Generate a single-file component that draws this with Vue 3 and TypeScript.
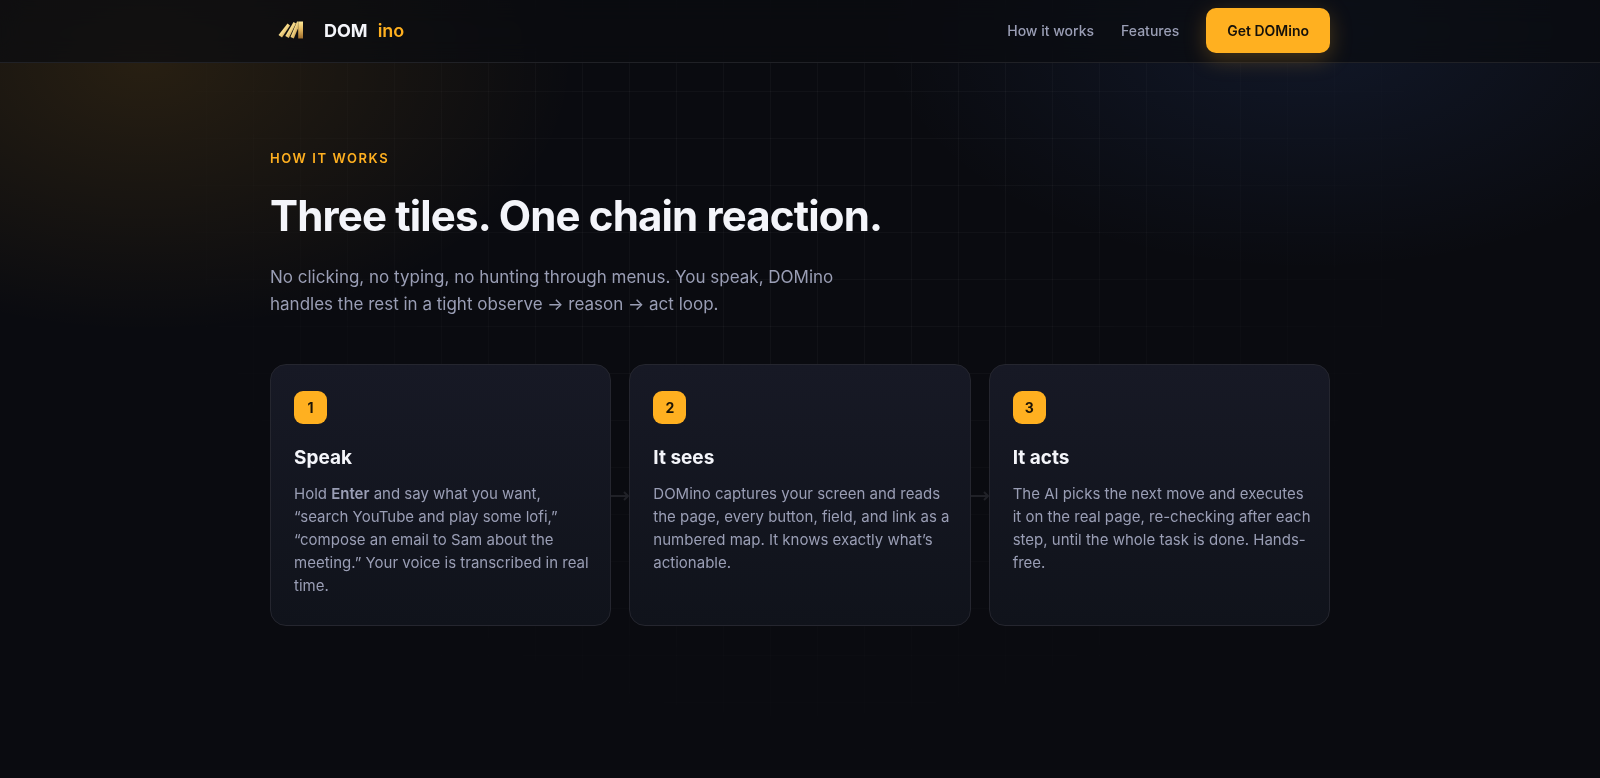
<script setup lang="ts">
interface Step {
  title: string
  lead: string
  strong?: string
  rest?: string
}

const steps: Step[] = [
  {
    title: 'Speak',
    lead: 'Hold ',
    strong: 'Enter',
    rest: ' and say what you want, “search YouTube and play some lofi,” “compose an email to Sam about the meeting.” Your voice is transcribed in real time.',
  },
  {
    title: 'It sees',
    lead: 'DOMino captures your screen and reads the page, every button, field, and link as a numbered map. It knows exactly what’s actionable.',
  },
  {
    title: 'It acts',
    lead: 'The AI picks the next move and executes it on the real page, re-checking after each step, until the whole task is done. Hands-free.',
  },
]
</script>

<template>
  <div class="page">
    <div class="grid-lines" aria-hidden="true"></div>
    <header class="topbar">
      <div class="wrap bar">
        <a class="brand" href="#">
          <svg class="mark" viewBox="0 0 44 44" aria-hidden="true">
            <defs>
              <linearGradient id="gold" x1="0" y1="0" x2="1" y2="1">
                <stop offset="0" stop-color="#c08a3a" />
                <stop offset="0.45" stop-color="#f7dc8c" />
                <stop offset="1" stop-color="#a97328" />
              </linearGradient>
              <linearGradient id="goldBar" x1="0" y1="0" x2="0" y2="1">
                <stop offset="0" stop-color="#ffe998" />
                <stop offset="0.5" stop-color="#dfb25a" />
                <stop offset="1" stop-color="#9a6a2c" />
              </linearGradient>
            </defs>
            <path d="M17.500 14.500 20 16.500 12 28.500 8.500 26Z" fill="url(#gold)" />
            <path d="M23.500 13 26 14.500 18.800 29 15.300 27Z" fill="url(#gold)" />
            <path d="M27 12.500H28V19.500L23.800 29.500 20.500 28Z" fill="url(#gold)" />
            <path d="M28.200 12.500H33V29.500H28.200Z" fill="url(#goldBar)" />
          </svg>
          <span class="name">DOM</span>
          <span class="name accent">ino</span>
        </a>
        <nav class="links" aria-label="Main">
          <a href="#how">How it works</a>
          <a href="#features">Features</a>
          <a class="cta" href="#get">Get DOMino</a>
        </nav>
      </div>
    </header>

    <main id="how" class="wrap content">
      <p class="eyebrow">HOW IT WORKS</p>
      <h1>Three tiles. One chain reaction.</h1>
      <p class="intro">
        No clicking, no typing, no hunting through menus. You speak, DOMino handles the rest in a
        tight observe → reason → act loop.
      </p>
      <div class="cards">
        <article v-for="(step, i) in steps" :key="step.title" class="card">
          <span class="num">{{ i + 1 }}</span>
          <h2>{{ step.title }}</h2>
          <p>{{ step.lead }}<strong v-if="step.strong">{{ step.strong }}</strong>{{ step.rest }}</p>
          <svg v-if="i < steps.length - 1" class="arrow" viewBox="0 0 18 12" aria-hidden="true">
            <path d="M0 6H17M13 2L17 6L13 10" fill="none" stroke="#202127" stroke-width="2" />
          </svg>
        </article>
      </div>
    </main>
  </div>
</template>

<style>
body {
  margin: 0;
  background: #0a0b10;
}
</style>

<style scoped>
.page {
  position: relative;
  min-height: 100vh;
  font-family: Inter, "Liberation Sans", sans-serif;
  color: #f4f5fa;
  background:
    radial-gradient(430px 270px at 145px 62px, rgba(255, 176, 32, 0.12), transparent),
    radial-gradient(430px 240px at 1310px 30px, rgba(80, 135, 255, 0.1), transparent),
    #0a0b10;
}

.grid-lines {
  position: absolute;
  inset: 0;
  background:
    linear-gradient(rgba(255, 255, 255, 0.03) 1px, transparent 1px) 0 44px / 47px 47px,
    linear-gradient(90deg, rgba(255, 255, 255, 0.03) 1px, transparent 1px) 18px 0 / 47px 47px;
  -webkit-mask-image: radial-gradient(ellipse 700px 640px at 50% 160px, #000 30%, transparent 100%);
  mask-image: radial-gradient(ellipse 700px 640px at 50% 160px, #000 30%, transparent 100%);
}

.wrap {
  box-sizing: border-box;
  width: calc(100% - 48px);
  max-width: 1060px;
  margin: 0 auto;
}

.topbar {
  position: relative;
  padding-bottom: 1px;
  border-bottom: 1px solid #202126;
  background: rgba(10, 11, 16, 0.7);
  backdrop-filter: blur(12px);
}

.bar {
  display: flex;
  align-items: center;
  justify-content: space-between;
  height: 61px;
}

.brand {
  display: flex;
  align-items: center;
  gap: 10px;
  color: inherit;
  text-decoration: none;
}

.mark {
  width: 44px;
  height: 44px;
}

.name {
  font-size: 18px;
  font-weight: 700;
  line-height: 24px;
}

.accent {
  font-weight: 600;
  color: #ffb020;
}

.links {
  display: flex;
  align-items: center;
  gap: 27px;
}

.links a {
  font-size: 14px;
  font-weight: 500;
  line-height: 23px;
  color: #9a9eb5;
  text-decoration: none;
}

.links .cta {
  padding: 11px 21px;
  border-radius: 10px;
  font-weight: 600;
  color: #16110a;
  background: #ffb020;
  box-shadow: 0 6px 22px rgba(255, 176, 32, 0.25);
}

.content {
  position: relative;
  padding: 84px 0 100px;
}

.eyebrow {
  margin: 0;
  font-size: 13px;
  font-weight: 600;
  line-height: 23px;
  letter-spacing: 0.12em;
  color: #ffb020;
}

h1 {
  margin: 23px 0 0;
  font-size: 42px;
  font-weight: 700;
  line-height: 46px;
  letter-spacing: -0.02em;
}

.intro {
  max-width: 580px;
  margin: 25px 0 0;
  font-size: 17px;
  line-height: 27px;
  color: #9a9eb5;
}

.cards {
  display: grid;
  grid-template-columns: repeat(3, 1fr);
  gap: 18px;
  margin-top: 46px;
}

.card {
  position: relative;
  padding: 26px 14px 28px 23px;
  border: 1px solid #25262f;
  border-radius: 16px;
  background: linear-gradient(#171925, #10131b);
}

.num {
  display: grid;
  place-items: center;
  width: 33px;
  height: 33px;
  border-radius: 9px;
  font-size: 14px;
  font-weight: 700;
  color: #1c1406;
  background: #ffb020;
}

h2 {
  margin: 22px 0 0;
  font-size: 19px;
  font-weight: 700;
  line-height: 24px;
}

.card p {
  margin: 12px 0 0;
  font-size: 15px;
  line-height: 23px;
  color: #9a9eb5;
}

.card strong {
  font-weight: 600;
}

.arrow {
  position: absolute;
  top: 50%;
  left: 100%;
  width: 18px;
  height: 12px;
  margin: -5px 0 0 1px;
}
</style>
